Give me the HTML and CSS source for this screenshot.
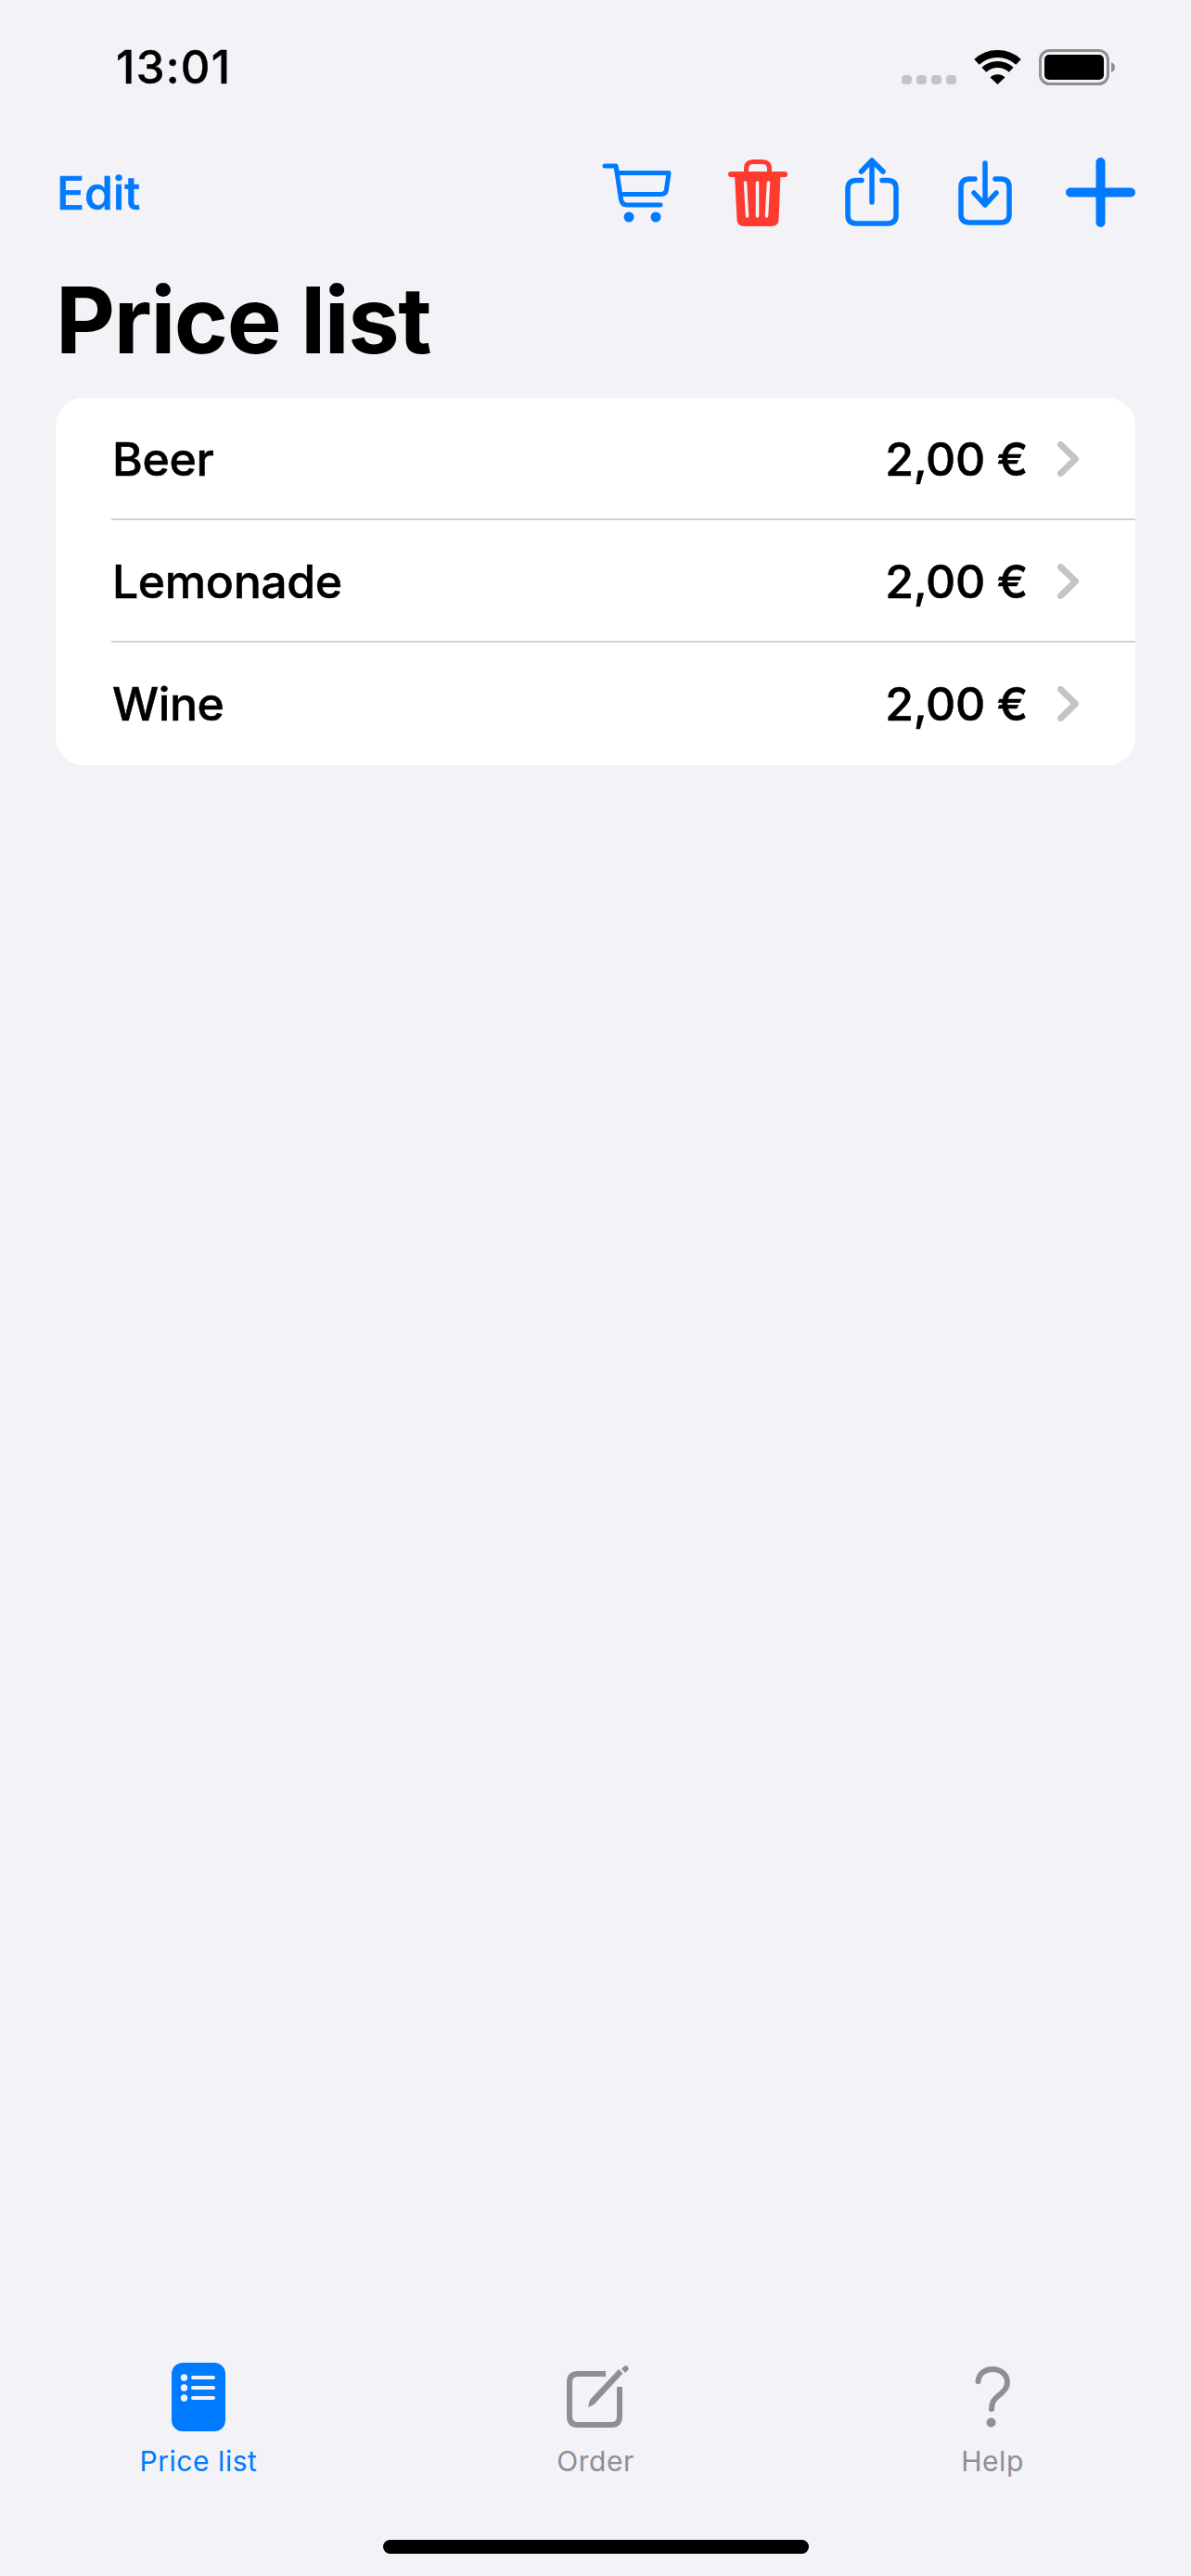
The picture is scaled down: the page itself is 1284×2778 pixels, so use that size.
FILE: index.html
```html
<!DOCTYPE html>
<html lang="en">
<head>
    <meta charset="UTF-8">
    <meta name="viewport" content="width=device-width, initial-scale=1.0">
    <title>Price list</title>
    <link rel="stylesheet" href="styles.css">
</head>
<body>
    <div class="page">
        <!-- status bar -->
        <div class="status-bar">
            <span class="time">13:01</span>
            <div class="status-icons">
                <div class="signal-dots"><i></i><i></i><i></i><i></i></div>
                <svg class="wifi" width="51" height="37" viewBox="0 0 51 37" fill="none" stroke="#000">
                    <path d="M3 12.9A33 33 0 0 1 48 12.9" stroke-width="8"/>
                    <path d="M10.8 21.3A21.5 21.5 0 0 1 40.2 21.3" stroke-width="7"/>
                    <path d="M25.5 37L17.5 29.5A11.5 11.5 0 0 1 33.5 29.5Z" fill="#000" stroke="none"/>
                </svg>
                <svg class="battery" width="82" height="39" viewBox="0 0 82 39">
                    <rect x="1.5" y="1.5" width="73" height="36" rx="10" fill="none" stroke="#8e8e93" stroke-width="3"/>
                    <rect x="6" y="6" width="64" height="27" rx="5" fill="#000"/>
                    <path d="M78 14Q82 15.5 82 19.5Q82 23.5 78 25Z" fill="#8e8e93"/>
                </svg>
            </div>
        </div>

        <!-- toolbar -->
        <div class="nav-bar">
            <a class="edit-link">Edit</a>
            <div class="nav-icons">
                <svg class="icon-cart" width="75" height="64" viewBox="0 0 75 64" fill="none" stroke="#007aff" stroke-width="5" stroke-linecap="round" stroke-linejoin="round">
                    <path d="M3 3H15L20.5 39Q21.5 45 27 45H63"/>
                    <path d="M17 10.5H72L69.5 28Q69 33.5 63.5 33.5H23"/>
                    <circle cx="29" cy="58" r="5.5" fill="#007aff" stroke="none"/>
                    <circle cx="58" cy="58" r="5.5" fill="#007aff" stroke="none"/>
                </svg>
                <svg class="icon-trash" width="64" height="72" viewBox="0 0 64 72" fill="none">
                    <path d="M19.5 16V10Q19.5 2.5 27 2.5H37Q44.5 2.5 44.5 10V16" stroke="#ff3b30" stroke-width="5"/>
                    <path d="M3 16H61" stroke="#ff3b30" stroke-width="6" stroke-linecap="round"/>
                    <path d="M7 16H56.5L54.5 65Q54 72 47 72H17Q10 72 9.5 65Z" fill="#ff3b30"/>
                    <path d="M18.5 25L20.5 61M31.5 25V61M43.5 25L41.5 61" stroke="#f2f2f7" stroke-width="3.5" stroke-linecap="round"/>
                </svg>
                <svg class="icon-share" width="58" height="74" viewBox="0 0 58 74" fill="none" stroke="#007aff" stroke-width="5.5" stroke-linecap="round" stroke-linejoin="round">
                    <path d="M18 24.5H12Q3 24.5 3 33.5V62Q3 71 12 71H46Q55 71 55 62V33.5Q55 24.5 46 24.5H40"/>
                    <path d="M29 48V3M17.5 15L29 3L41 15"/>
                </svg>
                <svg class="icon-download" width="58" height="70" viewBox="0 0 58 70" fill="none" stroke="#007aff" stroke-width="5.5" stroke-linecap="round" stroke-linejoin="round">
                    <path d="M18 20H12Q3 20 3 29V58Q3 67 12 67H46Q55 67 55 58V29Q55 20 46 20H40"/>
                    <path d="M29 3V48M17 35L29 48L41 35"/>
                </svg>
                <svg class="icon-plus" width="75" height="75" viewBox="0 0 75 75" fill="none" stroke="#007aff" stroke-width="10" stroke-linecap="round">
                    <path d="M37.5 5V70M5 37.5H70"/>
                </svg>
            </div>
        </div>

        <h1 class="page-title">Price list</h1>

        <!-- list -->
        <div class="price-card">
            <div class="price-row">
                <span class="item-name">Beer</span>
                <span class="item-price">2,00 €</span>
                <svg class="chevron" width="23" height="38" viewBox="0 0 23 38" fill="none" stroke="#c4c4c6" stroke-width="7" stroke-linecap="round" stroke-linejoin="round"><path d="M3.5 3.5L19.5 19L3.5 34.5"/></svg>
            </div>
            <div class="price-row">
                <span class="item-name">Lemonade</span>
                <span class="item-price">2,00 €</span>
                <svg class="chevron" width="23" height="38" viewBox="0 0 23 38" fill="none" stroke="#c4c4c6" stroke-width="7" stroke-linecap="round" stroke-linejoin="round"><path d="M3.5 3.5L19.5 19L3.5 34.5"/></svg>
            </div>
            <div class="price-row">
                <span class="item-name">Wine</span>
                <span class="item-price">2,00 €</span>
                <svg class="chevron" width="23" height="38" viewBox="0 0 23 38" fill="none" stroke="#c4c4c6" stroke-width="7" stroke-linecap="round" stroke-linejoin="round"><path d="M3.5 3.5L19.5 19L3.5 34.5"/></svg>
            </div>
        </div>

        <div class="spacer"></div>

        <!-- tab bar -->
        <div class="tab-bar">
            <div class="tab active">
                <div class="tab-icon">
                    <svg width="58" height="74" viewBox="0 0 58 74">
                        <rect width="58" height="74" rx="12" fill="#007aff"/>
                        <g fill="#f2f2f7">
                            <circle cx="13.5" cy="16" r="3.7"/>
                            <circle cx="13.5" cy="27" r="3.7"/>
                            <circle cx="13.5" cy="38" r="3.7"/>
                            <rect x="21" y="14" width="26" height="4" rx="2"/>
                            <rect x="21" y="25" width="26" height="4" rx="2"/>
                            <rect x="21" y="36" width="26" height="4" rx="2"/>
                        </g>
                    </svg>
                </div>
                <span class="tab-label">Price list</span>
            </div>
            <div class="tab">
                <div class="tab-icon">
                    <svg class="icon-order" width="68" height="69" viewBox="0 0 68 69" fill="none" stroke="#8e8e93">
                        <path d="M42 9H12Q3 9 3 18V55Q3 64 12 64H48Q57 64 57 55V23" stroke-width="6"/>
                        <path d="M23 45L25 37L56 4L60.5 8.5L29.5 42Z" fill="#8e8e93" stroke="none"/>
                        <path d="M59 3.5L62 0.8Q64 -0.5 66 1.5Q67.5 3.5 66 5L63 8Z" fill="#8e8e93" stroke="none"/>
                    </svg>
                </div>
                <span class="tab-label">Order</span>
            </div>
            <div class="tab">
                <div class="tab-icon">
                    <svg width="38" height="66" viewBox="0 0 38 66" fill="none" stroke="#8e8e93" stroke-width="6" stroke-linecap="round">
                        <path d="M3.5 16C4 8 11 3 19 3C28 3 35 9 35 17C35 24 30.5 27 26 31C21 35 18 38 18 46"/>
                        <circle cx="17.5" cy="60.5" r="5" fill="#8e8e93" stroke="none"/>
                    </svg>
                </div>
                <span class="tab-label">Help</span>
            </div>
        </div>

        <div class="home-indicator"></div>
    </div>
</body>
</html>
```

FILE: styles.css
```css
/* base */
body {
    margin: 0;
    padding: 0;
    background-color: #f2f2f7;
    font-family: Inter, "Liberation Sans", sans-serif;
    color: #000;
}

.page {
    display: flex;
    flex-direction: column;
    height: 2778px;
    overflow: hidden;
}

/* status bar */
.status-bar {
    display: flex;
    justify-content: space-between;
    align-items: flex-start;
    height: 117px;
    padding: 53px 82px 0 125px;
}

.time {
    font-size: 49px;
    font-weight: 500;
    line-height: 40px;
    letter-spacing: 1.3px;
    -webkit-text-stroke: 0.4px #000;
}

.status-icons {
    display: flex;
    align-items: flex-end;
    gap: 19px;
    height: 39px;
}

.signal-dots {
    display: flex;
    gap: 5px;
    margin-bottom: 1px;
}

.signal-dots i {
    width: 11px;
    height: 10px;
    border-radius: 4px;
    background-color: #c4c4c8;
}

.wifi {
    margin-bottom: 1px;
}

/* toolbar */
.nav-bar {
    display: flex;
    justify-content: space-between;
    align-items: center;
    height: 76px;
    padding: 0 60px 0 61px;
}

.edit-link {
    color: #007aff;
    font-size: 50px;
    font-weight: 500;
    letter-spacing: -0.1px;
    -webkit-text-stroke: 0.6px #007aff;
}

.nav-icons {
    display: flex;
    align-items: flex-start;
    gap: 61px;
    height: 76px;
}

.icon-cart { margin-top: 6px; }
.icon-trash { margin: 2px 1px 0 0; }
.icon-download { margin: 3px -3px 0 3px; }

.page-title {
    margin: 49px 0 34px;
    padding-left: 60px;
    font-size: 99px;
    font-weight: 700;
    line-height: 100px;
    letter-spacing: -1.4px;
}

/* list */
.price-card {
    margin: 0 60px;
    padding-left: 60px;
    background-color: #fff;
    border-radius: 30px;
}

.price-row {
    display: flex;
    align-items: center;
    box-sizing: border-box;
    height: 132px;
    padding: 1px 61px 0 0;
    border-bottom: 2px solid #d2d2d5;
    font-size: 50px;
    font-weight: 500;
    letter-spacing: -0.4px;
    -webkit-text-stroke: 0.5px #000;
}

.price-row:last-child {
    border-bottom-color: transparent;
}

.item-name {
    flex: 1;
    padding-left: 1px;
}

.chevron {
    margin-left: 32px;
}

.spacer {
    flex: 1;
}

/* tab bar */
.tab-bar {
    display: grid;
    grid-template-columns: repeat(3, 428px);
}

.tab {
    display: flex;
    flex-direction: column;
    align-items: center;
    color: #8e8e93;
}

.tab.active {
    color: #007aff;
}

.tab-icon {
    display: flex;
    align-items: center;
    justify-content: center;
    height: 74px;
    margin-bottom: 14px;
}

.icon-order {
    margin-left: 6px;
}

.tab-label {
    font-size: 30px;
    line-height: 36px;
    letter-spacing: 0.55px;
}

.home-indicator {
    width: 459px;
    height: 15px;
    margin: 67px auto 24px;
    border-radius: 8px;
    background-color: #000;
}
```
